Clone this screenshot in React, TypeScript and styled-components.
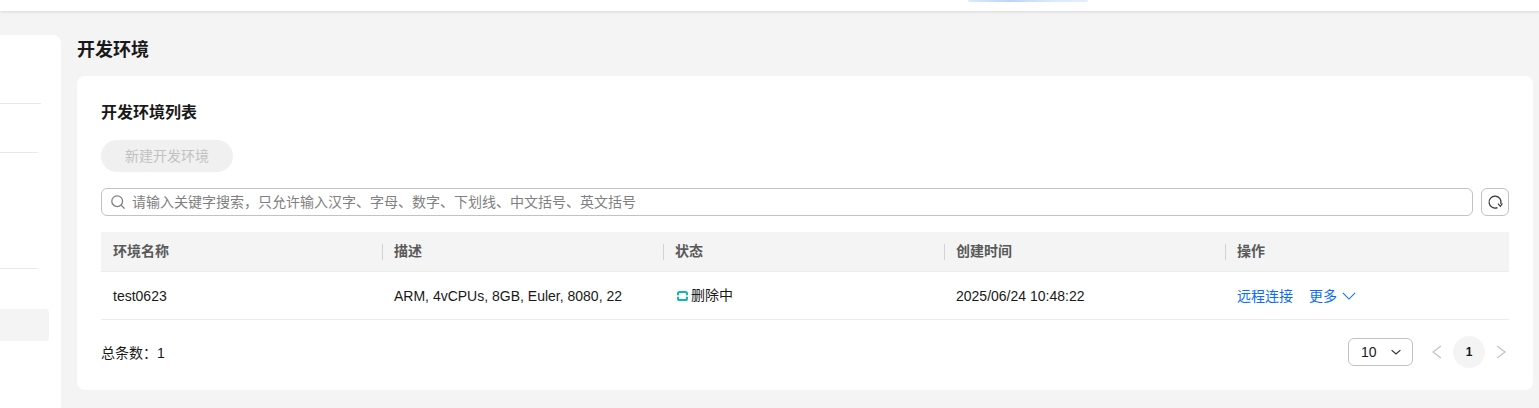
import React from 'react';
import styled, { createGlobalStyle } from 'styled-components';

const Global = createGlobalStyle`
  html, body { margin: 0; padding: 0; background: #f4f4f4; height: 100%; overflow: hidden; }
  body { font-family: "Liberation Sans", "Noto Sans CJK SC", sans-serif; font-size: 14px; color: #191919; }
  * { box-sizing: border-box; }
`;
const Page = styled.div`display: flex; flex-direction: column; height: 408px; overflow: hidden;`;
const TopBar = styled.header`
  height: 11px; flex: none; background: #fff; box-shadow: 0 1px 3px rgba(0,0,0,.12);
  display: flex; padding-left: 968px; position: relative; z-index: 1;
`;
const TopGlow = styled.div`
  width: 120px; height: 2px; border-radius: 0 0 6px 6px;
  background: linear-gradient(90deg, #dbe9fb, #bcd5f8 35%, #dbe9fb 70%, #e4effc);
`;
const Body = styled.div`flex: 1; display: flex; min-height: 0;`;
const Sidebar = styled.nav`
  width: 61px; flex: none; margin-top: 24px; background: #fff; border-top-right-radius: 8px;
  display: flex; flex-direction: column;
`;
const SideLine = styled.div<{ $w: number; $gap: number }>`
  width: ${p => p.$w}px; height: 1px; background: #e9e9e9; margin-top: ${p => p.$gap}px; flex: none;
`;
const SideActive = styled.div`
  width: 49px; height: 32px; margin-top: 40px; background: #f4f4f4; border-radius: 0 4px 4px 0; flex: none;
`;
const Main = styled.main`flex: 1; min-width: 0; padding: 24px 6px 18px 16px; display: flex; flex-direction: column;`;
const PageTitle = styled.h1`
  margin: 2px 0 13px; font-size: 18px; line-height: 26px; height: 26px; font-weight: 700; color: #191919;
`;
const Card = styled.section`
  background: #fff; border-radius: 8px; padding: 24px 24px 0; height: 314px; display: flex; flex-direction: column;
`;
const CardTitle = styled.h2`margin: 1px 0 15px; font-size: 16px; line-height: 24px; height: 24px; font-weight: 700; color: #191919;`;
const CreateButton = styled.button`
  width: 132px; height: 32px; border: 0; border-radius: 16px; background: #f0f0f0; color: #c2c2c2;
  font: inherit; font-size: 14px; padding: 0 0 2px; flex: none;
`;
const SearchRow = styled.div`display: flex; gap: 8px; margin-top: 16px; height: 28px; flex: none;`;
const SearchBox = styled.div`
  flex: 1; border: 1px solid #c2c2c2; border-radius: 6px; display: flex; align-items: center; padding-left: 8px; gap: 6px;
  font-size: 14px; color: #808080;
`;
const SearchHint = styled.span`padding-bottom: 2px;`;
const IconButton = styled.button`
  width: 28px; height: 28px; padding: 0; border: 1px solid #c2c2c2; border-radius: 6px; background: #fff;
  display: flex; align-items: center; justify-content: center;
`;
const Table = styled.div`margin-top: 16px; display: flex; flex-direction: column; flex: none;`;
const Row = styled.div`display: grid; grid-template-columns: 281px 281px 281px 281px 284px;`;
const HeadRow = styled(Row)`height: 40px; background: #f4f4f4; border-bottom: 1px solid #ececec;`;
const BodyRow = styled(Row)`height: 48px; border-bottom: 1px solid #ececec;`;
const HeadCell = styled.div<{ $sep?: boolean }>`
  display: flex; align-items: center; padding: 0 0 4px 12px; font-size: 14px; font-weight: 700; color: #595959; position: relative;
  ${p => p.$sep ? `&::before { content: ""; position: absolute; left: 0; top: 12px; height: 16px; width: 1px; background: #d3d3d3; }` : ''}
`;
const Cell = styled.div`display: flex; align-items: center; padding-left: 12px; font-size: 14px; color: #191919;`;
const StatusCell = styled(Cell)`padding-left: 14px; gap: 3px;`;
const StatusText = styled.span`padding-bottom: 4px;`;
const ActionCell = styled(Cell)`gap: 16px;`;
const ActionLink = styled.a`color: #0a6cff; font-size: 14px; display: inline-flex; align-items: center; gap: 5px; text-decoration: none;`;
const ActionText = styled.span`padding-bottom: 2px;`;
const Footer = styled.div`display: flex; align-items: center; justify-content: space-between; height: 32px; margin-top: 16px;`;
const Total = styled.div`font-size: 14px; color: #191919;`;
const Pager = styled.div`display: flex; align-items: center;`;
const SizeSelect = styled.div`
  width: 65px; height: 28px; border: 1px solid #c2c2c2; border-radius: 6px; padding: 0 11px 0 12px; margin-right: 16px;
  display: flex; align-items: center; justify-content: space-between; font-size: 14px; color: #191919;
`;
const PageArrow = styled.div`width: 16px; height: 16px; display: flex; align-items: center; justify-content: center;`;
const PageNum = styled.div`
  width: 32px; height: 32px; margin: 0 8px; border-radius: 50%; background: #f4f4f4; font-size: 12px; font-weight: 700;
  display: flex; align-items: center; justify-content: center; color: #191919;
`;

const Stroke = ({ d, color, size = 16, w = 1.2 }: { d: string; color: string; size?: number; w?: number }) => (
  <svg width={size} height={size} viewBox="0 0 16 16" fill="none" stroke={color} strokeWidth={w}>
    <path d={d} />
  </svg>
);

export default function App() {
  return (
    <Page>
      <Global />
      <TopBar><TopGlow /></TopBar>
      <Body>
        <Sidebar>
          <SideLine $w={41} $gap={68} />
          <SideLine $w={38} $gap={48} />
          <SideLine $w={38} $gap={115} />
          <SideActive />
        </Sidebar>
        <Main>
          <PageTitle>开发环境</PageTitle>
          <Card>
            <CardTitle>开发环境列表</CardTitle>
            <CreateButton disabled>新建开发环境</CreateButton>
            <SearchRow>
              <SearchBox>
                <svg width="16" height="16" viewBox="0 0 16 16" fill="none" stroke="#808080" strokeWidth="1.3">
                  <circle cx="7.2" cy="7.2" r="5.4" />
                  <path d="M11.2 11.2 14.6 14.6" />
                </svg>
                <SearchHint>请输入关键字搜索，只允许输入汉字、字母、数字、下划线、中文括号、英文括号</SearchHint>
              </SearchBox>
              <IconButton aria-label="刷新">
                <svg width="16" height="16" viewBox="0 0 16 16" fill="none" stroke="#333" strokeWidth="1.2">
                  <path d="M10.4 13.6A6 6 0 1 1 13.8 9.8" />
                  <path d="M11 9.6 13.4 12.4 15.4 9.4" strokeWidth="1.1" />
                </svg>
              </IconButton>
            </SearchRow>
            <Table>
              <HeadRow>
                <HeadCell>环境名称</HeadCell>
                <HeadCell $sep>描述</HeadCell>
                <HeadCell $sep>状态</HeadCell>
                <HeadCell $sep>创建时间</HeadCell>
                <HeadCell $sep>操作</HeadCell>
              </HeadRow>
              <BodyRow>
                <Cell>test0623</Cell>
                <Cell>ARM, 4vCPUs, 8GB, Euler, 8080, 22</Cell>
                <StatusCell>
                  <svg width="11" height="10" viewBox="0 0 11 10" fill="none" stroke="#12b5b0" strokeWidth="2">
                    <path d="M1 4.2V2.6Q1 1 2.6 1H8.4Q10 1 10 2.6V4.2" />
                    <path d="M1 5.8V7.4Q1 9 2.6 9H8.4Q10 9 10 7.4V5.8" />
                  </svg>
                  <StatusText>删除中</StatusText>
                </StatusCell>
                <Cell>2025/06/24 10:48:22</Cell>
                <ActionCell>
                  <ActionLink><ActionText>远程连接</ActionText></ActionLink>
                  <ActionLink>
                    <ActionText>更多</ActionText>
                    <Stroke d="M1 4.5 8 11.5 15 4.5" color="#0a6cff" size={14} />
                  </ActionLink>
                </ActionCell>
              </BodyRow>
            </Table>
            <Footer>
              <Total>总条数：1</Total>
              <Pager>
                <SizeSelect>
                  10
                  <Stroke d="M1 5 8 11 15 5" color="#333" size={10} w={2} />
                </SizeSelect>
                <PageArrow><Stroke d="M12 2 4 8 12 14" color="#c2c2c2" size={16} /></PageArrow>
                <PageNum>1</PageNum>
                <PageArrow><Stroke d="M4 2 12 8 4 14" color="#c2c2c2" size={16} /></PageArrow>
              </Pager>
            </Footer>
          </Card>
        </Main>
      </Body>
    </Page>
  );
}
